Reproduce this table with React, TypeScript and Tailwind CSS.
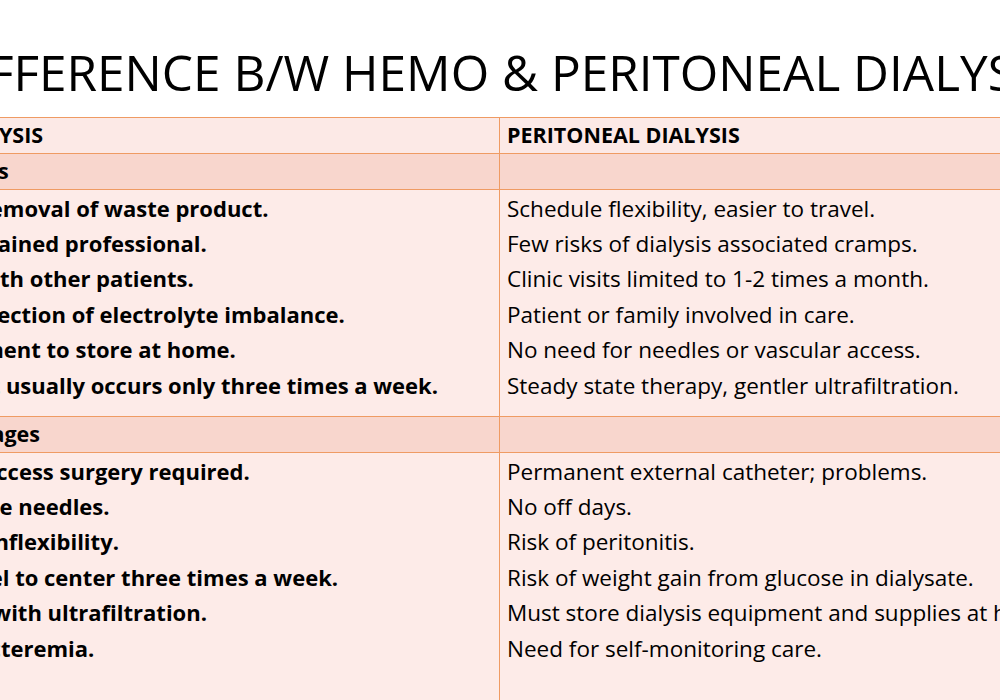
import React from 'react';

const font = { fontFamily: '"Open Sans", Lato, sans-serif' };

const advantages: [string, string][] = [
  ['Efficient removal of waste product.', 'Schedule flexibility, easier to travel.'],
  ['Done by trained professional.', 'Few risks of dialysis associated cramps.'],
  ['Contact with other patients.', 'Clinic visits limited to 1-2 times a month.'],
  ['Quick correction of electrolyte imbalance.', 'Patient or family involved in care.'],
  ['No equipment to store at home.', 'No need for needles or vascular access.'],
  ['Treatment usually occurs only three times a week.', 'Steady state therapy, gentler ultrafiltration.'],
];

const disadvantages: [string, string][] = [
  ['Vascular access surgery required.', 'Permanent external catheter; problems.'],
  ['Use of large needles.', 'No off days.'],
  ['Schedule inflexibility.', 'Risk of peritonitis.'],
  ['Must travel to center three times a week.', 'Risk of weight gain from glucose in dialysate.'],
  ['Problems with ultrafiltration.', 'Must store dialysis equipment and supplies at home.'],
  ['Risk of bacteremia.', 'Need for self-monitoring care.'],
];

const LabelRow = ({ left, right, tone }: { left: string; right: string; tone: 'head' | 'label' }) => (
  <div
    className={`grid h-[36px] grid-cols-[630px_600px] border-b-[1.5px] border-[#ef9b63] ${
      tone === 'head' ? 'bg-[#fce9e6]' : 'bg-[#f8d6cd]'
    }`}
  >
    <div className="flex items-center border-r-[1.5px] border-[#ef9b63] pl-[13px] text-[21.5px] font-bold text-black">
      {left}
    </div>
    <div className="flex items-center pl-[7px] text-[21.5px] font-bold text-black">{right}</div>
  </div>
);

const BodyRow = ({ rows, height }: { rows: [string, string][]; height: string }) => (
  <div className={`grid grid-cols-[630px_600px] bg-[#fdebe8] ${height}`}>
    <div className="border-r-[1.5px] border-[#ef9b63] pl-[13px] pt-[1px]">
      {rows.map(([l]) => (
        <p key={l} className="whitespace-nowrap text-[22px] font-bold leading-[35.4px] text-black">
          {l}
        </p>
      ))}
    </div>
    <div className="pl-[7px] pt-[1px]">
      {rows.map(([, r]) => (
        <p key={r} className="whitespace-nowrap text-[22.5px] leading-[35.4px] text-black">
          {r}
        </p>
      ))}
    </div>
  </div>
);

export default function App() {
  return (
    <div className="h-[700px] w-[1000px] overflow-hidden bg-white" style={font}>
      <div className="-ml-[130px] w-[1230px]">
        <h1 className="h-[116.5px] whitespace-nowrap pl-[24px] pt-[42px] text-center text-[49.5px] leading-[60px] text-black">
          DIFFERENCE B/W HEMO &amp; PERITONEAL DIALYSIS
        </h1>
        <div className="border-t-[1.5px] border-[#ef9b63]">
          <LabelRow left="HEMODIALYSIS" right="PERITONEAL DIALYSIS" tone="head" />
          <LabelRow left="Advantages" right="" tone="label" />
          <div className="border-b-[1.5px] border-[#ef9b63]">
            <BodyRow rows={advantages} height="h-[226px]" />
          </div>
          <LabelRow left="Disadvantages" right="" tone="label" />
          <BodyRow rows={disadvantages} height="h-[300px]" />
        </div>
      </div>
    </div>
  );
}
